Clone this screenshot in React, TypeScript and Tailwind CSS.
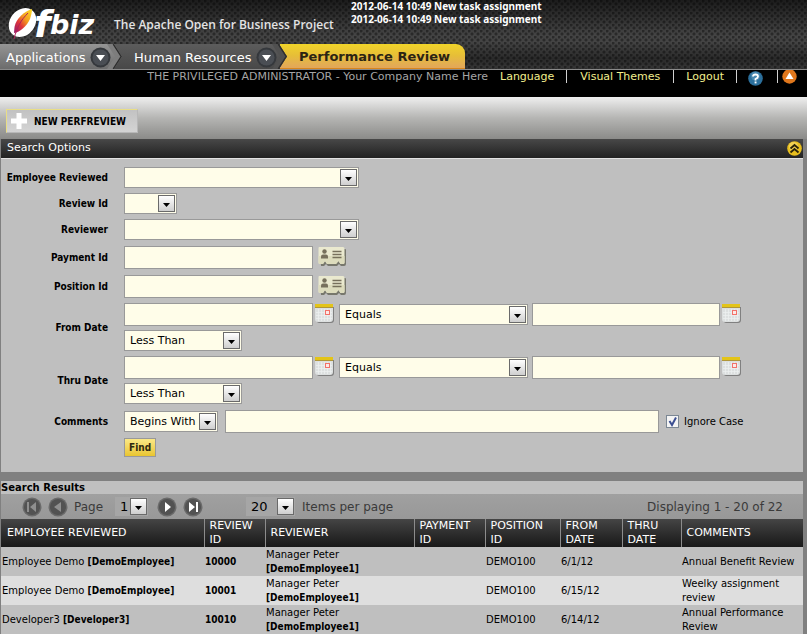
import React from "react";

const VERDANA = "font-['DejaVu_Sans',sans-serif]";
const NARROW = "font-['DejaVu_Sans_Condensed','DejaVu_Sans',sans-serif]";

function Logo() {
  return (
    <svg width="98" height="44" viewBox="0 0 98 44" role="img" aria-label="OFBiz" className="shrink-0 overflow-visible">
      <defs>
        <linearGradient id="feather" x1="1" y1="0" x2="0" y2="1">
          <stop offset="0" stopColor="#fbe02a" />
          <stop offset="0.4" stopColor="#f39a1e" />
          <stop offset="0.65" stopColor="#e0353a" />
          <stop offset="1" stopColor="#8e1a6e" />
        </linearGradient>
      </defs>
      <ellipse cx="22.500" cy="22.500" rx="15.500" ry="12.500" transform="rotate(-52 22.500 22.500)" fill="#fff" />
      <path d="M32 9C25 11 16 18 14.500 27L14 33C20 32 27 26 30 19C31 16 32 12 32 9Z" fill="url(#feather)" />
      <path d="M28 13C21 20 17 27 14 39" stroke="#b0205a" strokeWidth="1" fill="none" />
      <g fill="#fff" fontFamily="'DejaVu Sans', sans-serif" fontWeight="700" fontStyle="italic">
        <text x="34" y="37" fontSize="38">f</text>
        <text x="50" y="34" fontSize="27">biz</text>
      </g>
    </svg>
  );
}

function DropCircle() {
  return (
    <svg width="21" height="21" viewBox="0 0 21 21" aria-hidden="true" className="shrink-0">
      <circle cx="10.500" cy="10.500" r="10" fill="#35383c" />
      <circle cx="10.500" cy="10.500" r="8" fill="#4a4e54" />
      <path d="M6 8h9l-4.500 6z" fill="#fff" />
    </svg>
  );
}

function Tab({ label, kind }: { label: string; kind: "first" | "second" }) {
  const tone =
    kind === "first"
      ? "z-20 w-[122px] from-[#959595] to-[#6c6c6c] pl-[6px]"
      : "z-10 -ml-[10px] w-[175px] from-[#5c5c5c] to-[#484848] pl-[22px]";
  const point = kind === "first" ? "#7d7d7d" : "#505050";
  return (
    <a
      href="#"
      className={`relative flex h-[25px] shrink-0 items-center gap-[5px] bg-gradient-to-b pt-[2px] text-[13px] text-white [clip-path:polygon(0_0,calc(100%-8px)_0,100%_50%,calc(100%-8px)_100%,0_100%)] ${tone}`}
    >
      <span>{label}</span>
      <DropCircle />
      <svg width="15" height="25" viewBox="0 0 15 25" className="absolute right-0 top-0" aria-hidden="true">
        <path d="M0 0h7l8 12.500L7 25H0l8-12.500z" fill={point} />
        <path d="M6.500 0l8 12.500-8 12.500" stroke="#2e2e2e" strokeWidth="2" fill="none" />
      </svg>
    </a>
  );
}

function ArrowBox() {
  return (
    <span className="pointer-events-none absolute right-[1px] top-[1px] flex h-[17px] w-[17px] items-center justify-center border border-[#6a6a6a] bg-gradient-to-b from-white to-[#cfcfcf] pt-[2px]">
      <svg width="7" height="4" viewBox="0 0 7 4" aria-hidden="true">
        <path d="M0 0h7L3.500 4z" fill="#000" />
      </svg>
    </span>
  );
}

function Select({ id, label, value, width }: { id: string; label?: string; value?: string; width: string }) {
  return (
    <span className={`relative h-[21px] shrink-0 border border-[#999] bg-[#fffde9] ${width}`}>
      <select
        id={id}
        aria-label={label}
        className="block h-full w-full appearance-none pl-[5px] text-[11px] leading-[17px] text-black outline-none"
      >
        <option>{value ?? ""}</option>
      </select>
      <ArrowBox />
    </span>
  );
}

function PageSelect({ id, label, value, width }: { id: string; label: string; value: string; width: string }) {
  return (
    <span className={`relative h-[19px] bg-[#a6a6a6] ${width}`}>
      <select
        id={id}
        aria-label={label}
        className="block h-full w-full appearance-none pl-[5px] text-[13px] leading-[18px] text-black outline-none"
      >
        <option>{value}</option>
      </select>
      <ArrowBox />
    </span>
  );
}

function TextBox({ id, label, width = "w-[189px]" }: { id: string; label?: string; width?: string }) {
  return (
    <input
      id={id}
      aria-label={label}
      type="text"
      className={`h-[23px] shrink-0 border border-[#999] bg-[#fffde9] px-1 text-[11px] outline-none ${width}`}
    />
  );
}

function LookupButton() {
  return (
    <button type="button" aria-label="Look up" className="ml-[4px] shrink-0">
      <svg width="30" height="21" viewBox="0 0 30 21" className="block">
        <path
          d="M3 3h25q1 0 1 1v14q0 2-2 2h-3l-2-2-2 2h-9l-2-2-2 2H4z"
          fill="#77776c"
        />
        <path
          d="M2 1h24q1.500 0 1.500 1.500v14q0 1.500-1.500 1.500h-2.500l-2-3-2.500 3h-9l-2-3-2 3H3q-1.500 0-1.500-1.500v-14Q1.500 1 2 1z"
          fill="#eae9cf"
        />
        <path
          d="M1.500 10h26v6.500q0 1.500-1.500 1.500h-2.500l-2-3-2.500 3h-9l-2-3-2 3H3q-1.500 0-1.500-1.500z"
          fill="#dddcbd"
        />
        <circle cx="7.500" cy="5.500" r="2.200" fill="#77705c" />
        <path d="M4 12.500V10.500Q4 8.500 6 8.500h3q2 0 2 2v2z" fill="#77705c" />
        <path d="M15.500 5.500h9M15.500 8.500h9M15.500 11.500h9" stroke="#77705c" strokeWidth="1.300" />
      </svg>
    </button>
  );
}

function CalendarButton() {
  return (
    <button type="button" aria-label="Pick a date" className="ml-[2px] mt-[1px] shrink-0">
      <svg width="19" height="19" viewBox="0 0 19 19" className="block">
        <path d="M2 3h17v13q0 3-3 3H4q-2 0-2-2z" fill="#808080" />
        <path d="M0 1h18v14q0 3-3 3H3q-3 0-3-3z" fill="#dde0e0" />
        <path d="M3.500 5v12M6.500 5v12M9.500 5v12M12.500 5v12M15.500 5v12M1 8.500h16M1 11.500h16M1 14.500h16" stroke="#eef0f0" strokeWidth="0.700" />
        <path d="M0 0h18v3H0z" fill="#e3c418" />
        <path d="M0 3h18v1H0z" fill="#b0963a" />
        <rect x="10.500" y="6.500" width="4" height="4" fill="#fbe9e7" stroke="#f2726a" />
      </svg>
    </button>
  );
}

function Label({ htmlFor, children }: { htmlFor: string; children: React.ReactNode }) {
  return (
    <label htmlFor={htmlFor} className={`self-center text-right text-[10px] font-bold leading-[13px] ${NARROW}`}>
      {children}
    </label>
  );
}

function DateFields({ name }: { name: string }) {
  return (
    <div className="flex flex-col gap-[4px]">
      <div className="flex items-start">
        <TextBox id={name} />
        <CalendarButton />
        <span className="ml-[5px] mt-[1px] flex">
          <Select id={`${name}-op`} label={`${name} comparison`} value="Equals" width="w-[189px]" />
        </span>
        <span className="ml-[4px] flex">
          <TextBox id={`${name}-end`} label={`${name} end`} width="w-[188px]" />
        </span>
        <CalendarButton />
      </div>
      <Select id={`${name}-op2`} label={`${name} second comparison`} value="Less Than" width="w-[118px]" />
    </div>
  );
}

function PagerButton({ kind, off }: { kind: "first" | "prev" | "next" | "last"; off?: boolean }) {
  const fill = off ? "#8f8f8f" : "#fff";
  return (
    <button type="button" aria-label={`${kind} page`} className="shrink-0">
      <svg width="20" height="20" viewBox="0 0 20 20" className="block">
        <circle cx="10" cy="10" r="9.500" fill="#6a6a6a" />
        <circle cx="10" cy="10" r="8" fill="#525252" />
        {kind === "first" && <path d="M5 5h2v10H5zM14 5v10l-6-5z" fill={fill} />}
        {kind === "prev" && <path d="M13 5v10l-7-5z" fill={fill} />}
        {kind === "next" && <path d="M8 5v10l6-5z" fill={fill} />}
        {kind === "last" && <path d="M6 5v10l6-5zM13 5h2v10h-2z" fill={fill} />}
      </svg>
    </button>
  );
}

const columns = [
  { title: "EMPLOYEE REVIEWED", width: "w-[203px]" },
  { title: "REVIEW ID", width: "w-[61px]" },
  { title: "REVIEWER", width: "w-[149px]" },
  { title: "PAYMENT ID", width: "w-[71px]" },
  { title: "POSITION ID", width: "w-[75px]" },
  { title: "FROM DATE", width: "w-[62px]" },
  { title: "THRU DATE", width: "w-[59px]" },
  { title: "COMMENTS", width: "" },
];

const reviews = [
  { name: "Employee Demo", login: "DemoEmployee", id: "10000", from: "6/1/12", comment: "Annual Benefit Review" },
  { name: "Employee Demo", login: "DemoEmployee", id: "10001", from: "6/15/12", comment: "Weelky assignment review" },
  { name: "Developer3", login: "Developer3", id: "10010", from: "6/14/12", comment: "Annual Performance Review" },
];

export default function App() {
  return (
    <div className={`min-h-screen bg-[#808080] text-[11px] text-black ${VERDANA}`}>
      <header className="border-b border-[#8a8a8a] bg-[radial-gradient(circle_at_1px_1px,#00000060_1px,transparent_2px),radial-gradient(circle_at_4px_4px,#00000060_1px,transparent_2px),linear-gradient(#1c1c1c,#434343_50%,#444444_60%,#2a2a2a_85%,#363636)] bg-[length:6px_6px,6px_6px,100%_100%]">
        <div className="flex h-[44px]">
          <Logo />
          <p className="ml-[16px] mt-[15px] w-[237px] whitespace-nowrap font-['Open_Sans',sans-serif] text-[12px] font-semibold leading-[20px] text-[#e4e4e4]">
            The Apache Open for Business Project
          </p>
          <div className="whitespace-nowrap font-['Noto_Sans',sans-serif] text-[10px] font-bold leading-[13px] text-white">
            <p>2012-06-14 10:49 New task assignment</p>
            <p>2012-06-14 10:49 New task assignment</p>
          </div>
        </div>
        <nav className="flex">
          <Tab label="Applications" kind="first" />
          <Tab label="Human Resources" kind="second" />
          <a
            href="#"
            className="-ml-[7px] flex h-[25px] items-center rounded-tr-[9px] border-b border-[#d8861c] bg-gradient-to-b from-[#f0d428] via-[#e6bd38] to-[#e2a65a] pl-[19px] pr-[15px] pt-[2px] text-[13px] font-bold text-[#2b2413]"
          >
            Performance Review
          </a>
        </nav>
      </header>

      <div className="flex h-[27px] items-start justify-end bg-black pr-[10px] leading-[13px]">
        <span className="mr-[12px] whitespace-nowrap text-[#a5a5a5]">
          THE PRIVILEGED ADMINISTRATOR - Your Company Name Here
        </span>
        <a href="#" className="border-r border-[#d0d0d0] pr-[12px] text-[#f1ee8e]">Language</a>
        <a href="#" className="border-r border-[#d0d0d0] px-[13px] text-[#f1ee8e]">Visual Themes</a>
        <a href="#" className="border-r border-[#d0d0d0] px-[12px] text-[#f1ee8e]">Logout</a>
        <a href="#" aria-label="Help" className="h-[13px] border-r border-[#d0d0d0] pl-[11px] pr-[14px]">
          <svg width="15" height="15" viewBox="0 0 15 15" className="mt-[1px] block">
            <circle cx="7.500" cy="7.500" r="7.300" fill="#2b6f9c" />
            <circle cx="7.500" cy="5" r="4.500" fill="#6ba3c4" opacity="0.5" />
            <path d="M5 5.500Q5 3.500 7.500 3.500T10 5.500Q10 7 7.500 8V9.500" stroke="#fff" strokeWidth="1.800" fill="none" />
            <rect x="6.600" y="10.500" width="1.900" height="1.900" fill="#fff" />
          </svg>
        </a>
        <a href="#" aria-label="Collapse header" className="ml-[4px]">
          <svg width="15" height="14" viewBox="0 0 15 14" className="block">
            <circle cx="7.500" cy="6.500" r="7.200" fill="#e0771c" />
            <path d="M7.500 2.500l4 6.500h-8z" fill="#fff" />
          </svg>
        </a>
      </div>

      <div className="bg-gradient-to-b from-[#efefef] via-[#b5b5b3] to-[#8b8b89] px-[6px] pb-[6px] pt-[12px]">
        <button
          type="button"
          className={`flex h-[24px] items-center gap-[7px] border border-[#b8b8b8] border-l-[#e9de86] border-t-[#e9de86] bg-gradient-to-b from-[#c2c2c2] to-[#d4d4d4] pl-[4px] pr-[11px] text-[10px] font-bold ${NARROW}`}
        >
          <svg width="16" height="16" viewBox="0 0 16 16" aria-hidden="true">
            <path d="M5.500 0h5v5.500H16v5h-5.500V16h-5v-5.500H0v-5h5.500z" fill="#fff" />
          </svg>
          NEW PERFREVIEW
        </button>
      </div>

      <main className="pl-[1px] pr-[4px]">
        <section>
          <div className="flex h-[19px] items-center justify-between bg-gradient-to-b from-[#484848] to-[#222] pl-[6px] pr-[1px] text-white">
            <h2 className="pb-[1px]">Search Options</h2>
            <button type="button" aria-label="Collapse search options">
              <svg width="15" height="15" viewBox="0 0 15 15" className="block">
                <circle cx="7.500" cy="7.500" r="7.300" fill="#e8bf1e" />
                <circle cx="6.500" cy="5.500" r="4.500" fill="#f8e078" opacity="0.6" />
                <path d="M3.500 7.500l4-3.500 4 3.500M3.500 11.500l4-3.500 4 3.500" stroke="#2a2308" strokeWidth="1.800" fill="none" />
              </svg>
            </button>
          </div>
          <form
            className="grid grid-cols-[107px_1fr] gap-x-[16px] gap-y-[5px] border-t border-[#e2e2e2] bg-[#bfbfbf] pb-[15px] pt-[8px]"
            onSubmit={(e) => e.preventDefault()}
          >
            <Label htmlFor="employee">Employee Reviewed</Label>
            <div className="flex">
              <Select id="employee" width="w-[235px]" />
            </div>
            <Label htmlFor="review">Review Id</Label>
            <div className="flex">
              <Select id="review" width="w-[53px]" />
            </div>
            <Label htmlFor="reviewer">Reviewer</Label>
            <div className="flex">
              <Select id="reviewer" width="w-[235px]" />
            </div>
            <Label htmlFor="payment">Payment Id</Label>
            <div className="flex items-start pt-[1px]">
              <TextBox id="payment" />
              <LookupButton />
            </div>
            <Label htmlFor="position">Position Id</Label>
            <div className="flex items-start pt-[1px]">
              <TextBox id="position" />
              <LookupButton />
            </div>
            <Label htmlFor="from">From Date</Label>
            <DateFields name="from" />
            <Label htmlFor="thru">Thru Date</Label>
            <DateFields name="thru" />
            <Label htmlFor="comments">Comments</Label>
            <div className="flex items-center pt-[1px]">
              <Select id="comments-op" label="Comments comparison" value="Begins With" width="w-[94px]" />
              <span className="ml-[7px] flex">
                <TextBox id="comments" width="w-[434px]" />
              </span>
              <label className="ml-[7px] flex items-center gap-[5px] text-[10px]">
                <span className="relative flex">
                  <input
                    type="checkbox"
                    defaultChecked
                    className="peer h-[13px] w-[13px] appearance-none border border-[#7b8794] bg-[#f4f4f4]"
                  />
                  <svg width="13" height="13" viewBox="0 0 13 13" className="pointer-events-none absolute left-0 top-0 hidden peer-checked:block">
                    <path d="M3.500 6l2.500 4 4-7.500" stroke="#3c4f92" strokeWidth="2" fill="none" />
                  </svg>
                </span>
                Ignore Case
              </label>
            </div>
            <span />
            <div>
              <button
                type="submit"
                className={`block h-[19px] border border-[#999] bg-gradient-to-b from-[#fbe884] to-[#e9c52c] px-[4px] text-[10px] font-bold text-[#2e280f] ${NARROW}`}
              >
                Find
              </button>
            </div>
          </form>
        </section>

        <section className="mt-[9px]">
          <h2 className="h-[13px] bg-[#c0c0c0] text-[10px] font-bold leading-[13px]">Search Results</h2>
          <div className="flex h-[25px] items-center bg-gradient-to-b from-[#a0a0a0] to-[#989898] pl-[21px] pr-[20px] text-[12px] text-[#3a3a3a]">
            <PagerButton kind="first" off />
            <span className="ml-[6px] flex">
              <PagerButton kind="prev" off />
            </span>
            <label htmlFor="page" className="ml-[6px] mr-[12px]">Page</label>
            <PageSelect id="page" label="Page" value="1" width="w-[33px]" />
            <span className="ml-[9px] flex gap-[6px]">
              <PagerButton kind="next" />
              <PagerButton kind="last" />
            </span>
            <span className="ml-[43px] flex">
              <PageSelect id="size" label="Items per page" value="20" width="w-[49px]" />
            </span>
            <label htmlFor="size" className="ml-[7px]">Items per page</label>
            <span className="ml-auto">Displaying 1 - 20 of 22</span>
          </div>
          <table className="w-full table-fixed border-collapse leading-[14px]">
            <thead>
              <tr className="h-[28px] bg-gradient-to-b from-[#454545] to-[#191919] text-left text-white">
                {columns.map((c, i) => (
                  <th
                    key={c.title}
                    className={`p-0 font-normal ${c.width} ${i === 0 ? "pl-[6px]" : "border-l border-[#8c8c8c] pl-[5px] pr-[2px]"}`}
                  >
                    {c.title}
                  </th>
                ))}
              </tr>
            </thead>
            <tbody className="text-[10px]">
              {reviews.map((r) => (
                <tr key={r.id} className="h-[29px] odd:bg-[#bfbfbf] even:bg-[#dedede]">
                  <td className="p-0 pl-[1px]">
                    {r.name} <b className={NARROW}>[{r.login}]</b>
                  </td>
                  <td className={`p-0 pl-[1px] font-bold ${NARROW}`}>{r.id}</td>
                  <td className="p-0 pl-[1px]">
                    Manager Peter <b className={NARROW}>[DemoEmployee1]</b>
                  </td>
                  <td className="p-0" />
                  <td className="p-0 pl-[1px]">DEMO100</td>
                  <td className="p-0 pl-[1px]">{r.from}</td>
                  <td className="p-0" />
                  <td className="p-0 pl-[1px]">{r.comment}</td>
                </tr>
              ))}
            </tbody>
          </table>
        </section>
      </main>
    </div>
  );
}
